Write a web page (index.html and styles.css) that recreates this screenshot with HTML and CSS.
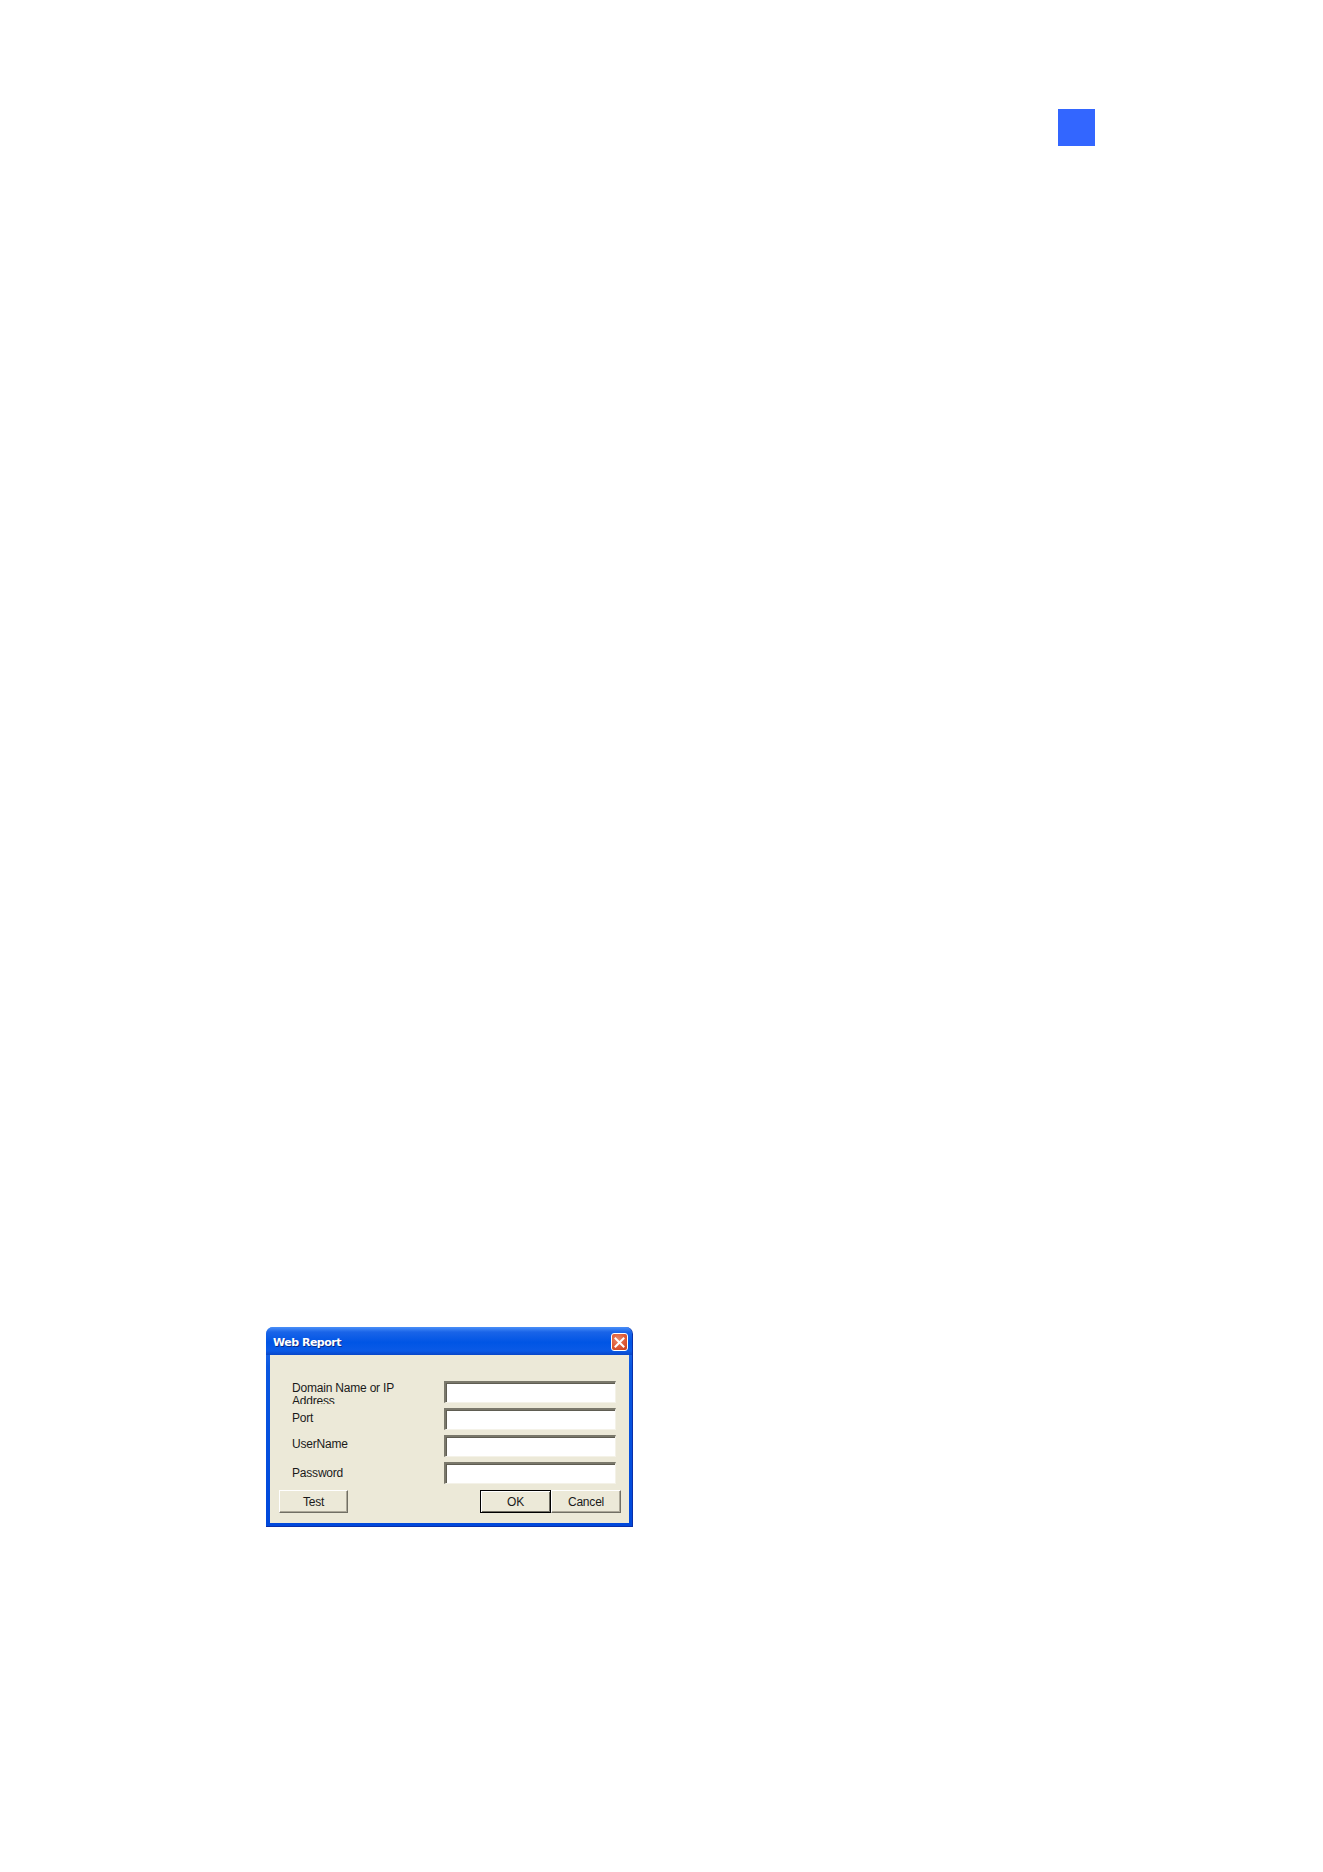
FILE: index.html
```html
<!DOCTYPE html>
<html>
<head>
<meta charset="utf-8">
<title>Web Report</title>
<link rel="stylesheet" href="styles.css">
</head>
<body>
<div class="page">
  <div class="header">
    <div class="chapter-mark"></div>
  </div>
  <div class="figure">
    <div class="window">
      <div class="titlebar">
        <span class="title">Web Report</span>
        <span class="close">
          <svg width="11" height="11" viewBox="0 0 11 11"><path d="M1.5 1.5 L9.5 9.5 M9.5 1.5 L1.5 9.5" stroke="#fff" stroke-width="2" stroke-linecap="square" fill="none"/></svg>
        </span>
      </div>
      <div class="client">
        <div class="form">
          <div class="lbl lbl-first">Domain Name or IP Address</div>
          <div class="field"></div>
          <div class="lbl">Port</div>
          <div class="field"></div>
          <div class="lbl lbl-user">UserName</div>
          <div class="field"></div>
          <div class="lbl lbl-pass">Password</div>
          <div class="field"></div>
        </div>
        <div class="buttons">
          <div class="btn btn-test">Test</div>
          <div class="right-buttons">
            <div class="btn btn-default">OK</div>
            <div class="btn">Cancel</div>
          </div>
        </div>
      </div>
    </div>
  </div>
</div>
</body>
</html>
```

FILE: styles.css
```css
html, body {
  margin: 0;
  padding: 0;
  background: #ffffff;
}

.page {
  width: 1323px;
  height: 1872px;
  background: #ffffff;
  overflow: hidden;
}

.header {
  display: flex;
  justify-content: flex-end;
  padding: 109px 228px 0 0;
}

.chapter-mark {
  width: 37px;
  height: 37px;
  background: #3366ff;
}

.figure {
  margin-top: 1181px;
  padding-left: 266px;
}

.window {
  width: 367px;
  height: 200px;
  box-sizing: border-box;
  display: flex;
  flex-direction: column;
  background: linear-gradient(180deg, #2f79f2 0%, #0a57e0 20%, #0048db 100%);
  border-radius: 7px 7px 0 0;
  padding: 0 3px 3px 4px;
  border-right: 1px solid #0a2fa8;
  border-bottom: 1px solid #0a2fa8;
}

.titlebar {
  height: 28px;
  flex: none;
  display: flex;
  align-items: center;
  justify-content: space-between;
  background: linear-gradient(180deg, #4a8ff8 0%, #1a64e8 18%, #0055e5 55%, #0a5ae6 85%, #0846c8 100%);
  margin: 0 -3px 0 -4px;
  padding-left: 7px;
  padding-right: 4px;
  border-radius: 7px 7px 0 0;
}

.title {
  font-family: "DejaVu Sans", Verdana, sans-serif;
  font-weight: bold;
  font-size: 11px;
  letter-spacing: -0.5px;
  color: #ffffff;
  text-shadow: 1px 1px 0 #0a2a88;
  padding-top: 2px;
}

.close {
  width: 17px;
  height: 18px;
  box-sizing: border-box;
  border: 1px solid #ffffff;
  border-radius: 3px;
  background: radial-gradient(circle at 40% 35%, #ec8b6c 0%, #de5a35 55%, #c43d1a 100%);
  display: flex;
  align-items: center;
  justify-content: center;
  margin-top: 2px;
}

.close svg {
  display: block;
}

.client {
  flex: 1;
  background: #ece9d8;
  display: flex;
  flex-direction: column;
  padding: 26px 8px 0 22px;
  font-family: "Liberation Sans", Arial, sans-serif;
  font-size: 12px;
  letter-spacing: -0.2px;
  color: #1a1a1a;
}

.form {
  display: grid;
  grid-template-columns: 152px 172px;
  grid-auto-rows: 22px;
  row-gap: 5px;
}

.lbl {
  line-height: 13px;
  padding-top: 4px;
  overflow: hidden;
}

.lbl-first {
  padding-top: 1px;
  width: 112px;
  height: 23px;
  box-sizing: border-box;
}

.lbl-user {
  padding-top: 3px;
}

.lbl-pass {
  padding-top: 5px;
}

.field {
  height: 22px;
  box-sizing: border-box;
  background: #ffffff;
  border-top: 2px solid #7a786b;
  border-left: 2px solid #7a786b;
  border-bottom: 1px solid #f4f2e8;
  border-right: 1px solid #f4f2e8;
  box-shadow: inset 1px 1px 0 #5f5d52;
}

.buttons {
  display: flex;
  justify-content: space-between;
  margin-top: 6px;
  margin-left: -13px;
}

.right-buttons {
  display: flex;
}

.btn {
  width: 70px;
  height: 23px;
  box-sizing: border-box;
  background: #ece9d8;
  border-top: 1px solid #ffffff;
  border-left: 1px solid #ffffff;
  border-right: 1px solid #716f64;
  border-bottom: 1px solid #716f64;
  box-shadow: inset -1px -1px 0 #aca899;
  display: flex;
  align-items: center;
  justify-content: center;
  line-height: 13px;
  padding-top: 1px;
}

.btn-test {
  width: 69px;
}

.btn-default {
  width: 71px;
  border: 1px solid #000000;
  box-shadow: inset 1px 1px 0 #ffffff, inset -1px -1px 0 #716f64;
}
```
